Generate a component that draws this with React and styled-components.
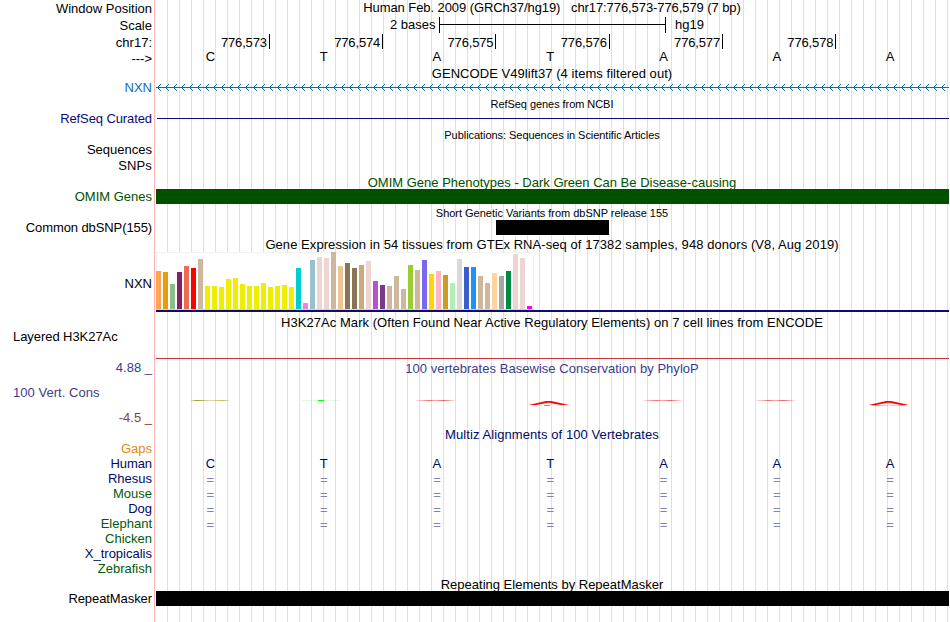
import React from 'react'
import styled, { createGlobalStyle } from 'styled-components'

const GlobalStyle = createGlobalStyle`
  body {
    margin: 0;
    background: #fff;
  }
`

const INK = '#000'
const NAVY = '#0c0c78'
const BLUE = '#0c6cb4'
const GREEN = '#005000'
const SPECIES_BLUE = '#000a64'
const SPECIES_GREEN = '#005a0a'
const CONS = '#3c3c8c'
const CONS_LOW = '#8c3c3c'
const ORANGE = '#e38815'

const Browser = styled.main`
  box-sizing: border-box;
  width: 950px;
  height: 622px;
  overflow: hidden;
  font-family: 'Liberation Sans', Arial, Helvetica, sans-serif;
  font-size: 13px;
  line-height: 15px;
  color: ${INK};
  white-space: pre;
  background-image:
    linear-gradient(#ffb4b4, #ffb4b4),
    linear-gradient(90deg, #dcdcff 1px, transparent 1px);
  background-size: 1px 100%, 12px 100%;
  background-position: 154px 0, 167px 0;
  background-repeat: no-repeat, repeat-x;
`

const Row = styled.section`
  display: grid;
  grid-template-columns: 156px 793px;
  height: ${p => p.$h}px;
`

/* covers the guide lines that repeat to the left of the data area */
const Side = styled.div`
  height: 100%;
  background:
    linear-gradient(#ffb4b4, #ffb4b4) 154px 0 / 1px 100% no-repeat,
    #fff;
`

const Label = styled.div`
  box-sizing: border-box;
  height: 100%;
  margin-right: 2px;
  padding: ${p => p.$drop || 0}px 2px 0 13px;
  text-align: ${p => (p.$left ? 'left' : 'right')};
  color: ${p => p.$color || INK};
  letter-spacing: ${p => p.$spacing || 0}px;
`

const Title = styled.div`
  padding: ${p => p.$drop || 0}px 1px 0 0;
  text-align: center;
  font-size: ${p => (p.$small ? 11 : 13)}px;
  letter-spacing: ${p => p.$spacing || 0}px;
  color: ${p => p.$color || INK};
`

const ScaleBar = styled.div`
  display: flex;
  padding-left: 234px;
`

const ScaleRule = styled.div`
  display: flex;
  align-items: center;
  box-sizing: border-box;
  width: 227px;
  height: 16px;
  margin: 0 9.5px 0 3px;
  border: solid ${INK};
  border-width: 0 1px;

  &::before {
    content: '';
    flex: 1;
    height: 1px;
    margin-bottom: 1px;
    background: ${INK};
  }
`

const Bases = styled.div`
  display: grid;
  grid-template-columns: repeat(7, 1fr);
  padding-top: ${p => p.$drop || 0}px;
  color: ${p => p.$color || INK};
`

const Base = styled.span`
  padding-right: 4.5px;
  text-align: center;
`

const Coordinate = styled.span`
  height: 15px;
  margin-right: -0.6px;
  padding-right: 2px;
  border-right: 1px solid ${INK};
  text-align: right;
  line-height: 17px;
  letter-spacing: -0.15px;
`

const Line = styled.div`
  height: 1px;
  margin-top: ${p => p.$top}px;
  margin-left: ${p => p.$inset || 0}px;
  background: ${p => p.$color};
`

const Block = styled.div`
  width: ${p => (p.$w ? `${p.$w}px` : '100%')};
  height: 15px;
  margin-left: ${p => p.$start || 0}px;
  background: ${p => p.$color};
`

const Expression = styled.div`
  height: 58px;
  border-bottom: 2px solid ${NAVY};
`

const Chart = styled.div`
  display: flex;
  align-items: flex-end;
  gap: 2px;
  box-sizing: border-box;
  width: 378px;
  height: 58px;
  border-bottom: 1px solid #d3d3d3;
  background: #fff;
  box-shadow: inset -1px 1px #f2f2f2, inset 1px 0 #f2f2f2;
`

const Tissue = styled.div`
  width: 5px;
  height: ${p => p.$value}px;
  background: ${p => p.$color};
`

const Drawing = styled.svg`
  display: block;
`

const yellow = [23, 23, 22, 30, 31, 25, 23, 23, 26, 22, 23, 24, 22]

const tissues = [
  [38, '#ffa54f'],
  [37, '#ee9a00'],
  [25, '#8fbc8f'],
  [37, '#8b1c62'],
  [43, '#ee6a50'],
  [41, '#ff0000'],
  [50, '#cdb79e'],
  ...yellow.map(value => [value, '#eeee00']),
  [41, '#00cdcd'],
  [6, '#ee82ee'],
  [49, '#9ac0cd'],
  [52, '#eed5d2'],
  [51, '#eed5d2'],
  [57, '#cdb79e'],
  [43, '#eec591'],
  [46, '#8b7355'],
  [41, '#8b7355'],
  [44, '#cdaa7d'],
  [48, '#eed5d2'],
  [28, '#b452cd'],
  [24, '#7a378b'],
  [23, '#cdb79e'],
  [33, '#cdb79e'],
  [20, '#cdb79e'],
  [44, '#9acd32'],
  [39, '#cdb79e'],
  [49, '#7a67ee'],
  [35, '#ffd700'],
  [38, '#ffb6c1'],
  [34, '#cd9b1d'],
  [26, '#b4eeb4'],
  [50, '#d9d9d9'],
  [42, '#3a5fcd'],
  [42, '#1e90ff'],
  [33, '#cdb79e'],
  [26, '#cdb79e'],
  [36, '#ffd39b'],
  [33, '#a6a6a6'],
  [38, '#008b45'],
  [55, '#eed5d2'],
  [51, '#eed5d2'],
  [3, '#ff00ff']
]

const coordinates = ['776,573', '776,574', '776,575', '776,576', '776,577', '776,578']
const sequence = 'CTATAAA'.split('')

const species = [
  ['Rhesus', SPECIES_BLUE, true],
  ['Mouse', SPECIES_GREEN, true],
  ['Dog', SPECIES_BLUE, true],
  ['Elephant', SPECIES_GREEN, true],
  ['Chicken', SPECIES_GREEN, false],
  ['X_tropicalis', SPECIES_BLUE, false],
  ['Zebrafish', SPECIES_GREEN, false]
]

const Track = ({ h, label, color, drop, left, spacing, children }) => (
  <Row $h={h}>
    <Side>
      <Label $color={color} $drop={drop} $left={left} $spacing={spacing}>{label}</Label>
    </Side>
    <div>{children}</div>
  </Row>
)

const Letters = ({ letters, color, drop }) => (
  <Bases $color={color} $drop={drop}>
    {letters.map((letter, i) => <Base key={i}>{letter}</Base>)}
  </Bases>
)

// Intron line, with an arrow head every 8px that points to the 5' end
const Strand = () => (
  <Drawing width="793" height="15" shapeRendering="crispEdges">
    <path d="M0 7.5H793" stroke={BLUE} />
    {Array.from({ length: 99 }, (_, i) => (
      <path
        key={i}
        fill={BLUE}
        d={`M${i * 8 + 2} 6h1v1h-1zm1 -1h1v1h-1zm1 -1h1v1h-1zM${i * 8 + 2} 8h1v1h-1zm1 1h1v1h-1zm1 1h1v1h-1z`}
      />
    ))}
  </Drawing>
)

const Conservation = () => (
  <Drawing width="793" height="31" fill="none">
    <defs>
      <linearGradient id="olive">
        <stop offset="0" stopColor="#a0a020" stopOpacity="0.3" />
        <stop offset="0.15" stopColor="#a0a020" />
        <stop offset="0.5" stopColor="#a0a020" stopOpacity="0.35" />
        <stop offset="0.85" stopColor="#a0a020" stopOpacity="0.7" />
        <stop offset="1" stopColor="#a0a020" stopOpacity="0.2" />
      </linearGradient>
      <linearGradient id="red">
        <stop offset="0" stopColor="#e00000" stopOpacity="0.1" />
        <stop offset="0.35" stopColor="#e00000" stopOpacity="0.55" />
        <stop offset="0.5" stopColor="#e00000" stopOpacity="0.3" />
        <stop offset="0.7" stopColor="#e00000" stopOpacity="0.6" />
        <stop offset="1" stopColor="#e00000" stopOpacity="0.1" />
      </linearGradient>
    </defs>
    <rect x="35" y="21" width="38" height="1" fill="url(#olive)" />
    <rect x="146" y="21" width="37" height="1" fill="#00e000" fillOpacity="0.12" />
    <rect x="162" y="21" width="6" height="1" fill="#00ff00" />
    {[260, 487, 600].map(x => (
      <rect key={x} x={x} y="21" width="39" height="1" fill="url(#red)" />
    ))}
    {[372, 712].map(x => (
      <g key={x}>
        <path d={`M${x + 0.5} 26L${x + 18} 22H${x + 23}L${x + 41} 26H${x + 33}L${x + 22} 23.7H${x + 19}L${x + 8} 26z`} fill="#ff0000" />
        <path d={`M${x + 10} 25L${x + 20} 24.4L${x + 31} 25`} stroke="#ff0000" strokeOpacity="0.3" strokeWidth="0.7" />
      </g>
    ))}
    <rect x="375" y="26" width="35" height="1" fill="#00ff00" fillOpacity="0.08" />
    <rect x="388" y="26" width="6" height="1" fill="#00ff00" />
    <rect x="714" y="26" width="37" height="1" fill="url(#olive)" fillOpacity="0.75" />
  </Drawing>
)

const App = () => (
  <Browser>
    <GlobalStyle />
    <Track h={17} label="Window Position" drop={1}>
      <Title $spacing={-0.08}>{'Human Feb. 2009 (GRCh37/hg19)   chr17:776,573-776,579 (7 bp)'}</Title>
    </Track>
    <Track h={17} label="Scale" drop={1}>
      <ScaleBar>
        <span>2 bases</span>
        <ScaleRule />
        <span>hg19</span>
      </ScaleBar>
    </Track>
    <Track h={15} label="chr17:" drop={1}>
      <Bases>
        {coordinates.map(position => <Coordinate key={position}>{position}</Coordinate>)}
      </Bases>
    </Track>
    <Track h={17} label="--->" drop={2}>
      <Letters letters={sequence} />
    </Track>
    <Track h={14}>
      <Title $spacing={0.05}>GENCODE V49lift37 (4 items filtered out)</Title>
    </Track>
    <Track h={15} label="NXN" color={BLUE}>
      <Strand />
    </Track>
    <Track h={16}>
      <Title $small $drop={2} $spacing={-0.06}>RefSeq genes from NCBI</Title>
    </Track>
    <Track h={15} label="RefSeq Curated" color={NAVY} spacing={-0.1}>
      <Line $top={7} $inset={1} $color={NAVY} />
    </Track>
    <Track h={16}>
      <Title $small $drop={2} $spacing={-0.05}>Publications: Sequences in Scientific Articles</Title>
    </Track>
    <Track h={16} label="Sequences" />
    <Track h={16} label="SNPs" spacing={0.15} />
    <Track h={15}>
      <Title $drop={1} $color={GREEN}>OMIM Gene Phenotypes - Dark Green Can Be Disease-causing</Title>
    </Track>
    <Track h={15} label="OMIM Genes" color={GREEN}>
      <Block $color={GREEN} />
    </Track>
    <Track h={16}>
      <Title $small $drop={2} $spacing={-0.02}>Short Genetic Variants from dbSNP release 155</Title>
    </Track>
    <Track h={15} label="Common dbSNP(155)" spacing={-0.1}>
      <Block $start={340} $w={113} $color={INK} />
    </Track>
    <Track h={17}>
      <Title $drop={2} $spacing={0.066}>Gene Expression in 54 tissues from GTEx RNA-seq of 17382 samples, 948 donors (V8, Aug 2019)</Title>
    </Track>
    <Track h={61} label="NXN" drop={24}>
      <Expression>
        <Chart>
          {tissues.map(([value, color], i) => <Tissue key={i} $value={value} $color={color} />)}
        </Chart>
      </Expression>
    </Track>
    <Track h={16}>
      <Title $drop={2} $spacing={0.05}>H3K27Ac Mark (Often Found Near Active Regulatory Elements) on 7 cell lines from ENCODE</Title>
    </Track>
    <Track h={30} label="Layered H3K27Ac" left spacing={-0.06}>
      <Line $top={29} $color="#c8323c" />
    </Track>
    <Track h={20} label="4.88 _" color={CONS} drop={1}>
      <Title $drop={2} $color={CONS} $spacing={0.035}>100 vertebrates Basewise Conservation by PhyloP</Title>
    </Track>
    <Track h={31} label="100 Vert. Cons" color={CONS} drop={6} left spacing={0.04}>
      <Conservation />
    </Track>
    <Track h={15} label="-4.5 _" color={CONS_LOW} />
    <Track h={16}>
      <Title $drop={2} $color={SPECIES_BLUE} $spacing={0.08}>Multiz Alignments of 100 Vertebrates</Title>
    </Track>
    <Track h={15} label="Gaps" color={ORANGE} />
    <Track h={15} label="Human" color={SPECIES_BLUE} spacing={-0.1}>
      <Letters letters={sequence} color={SPECIES_BLUE} />
    </Track>
    {species.map(([name, color, aligned]) => (
      <Track key={name} h={15} label={name} color={color}>
        {aligned && <Letters letters={sequence.map(() => '=')} color="#8084b1" drop={1} />}
      </Track>
    ))}
    <Track h={15}>
      <Title $drop={1}>Repeating Elements by RepeatMasker</Title>
    </Track>
    <Track h={15} label="RepeatMasker" spacing={-0.08}>
      <Block $color={INK} />
    </Track>
    <Track h={16} />
  </Browser>
)

export default App
